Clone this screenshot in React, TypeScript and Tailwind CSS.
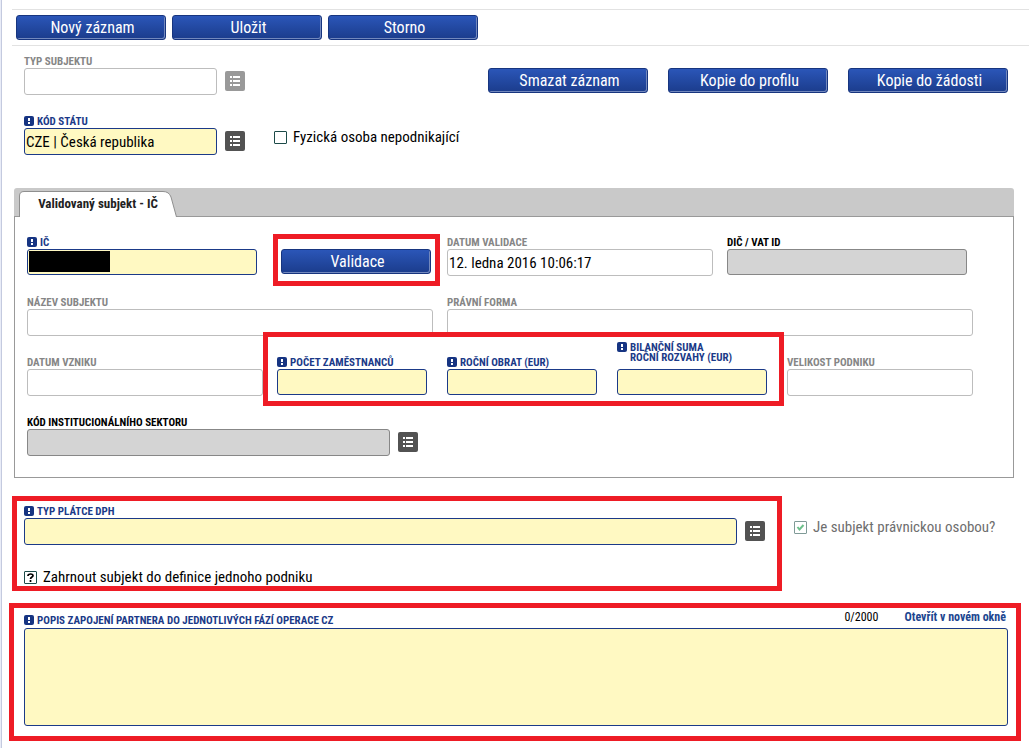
import { useId, type ReactNode } from "react";
import clsx from "clsx";

type Tone = "muted" | "plain" | "required";

const labelTone: Record<Tone, string> = {
  muted: "text-[#868686]",
  plain: "text-black",
  required: "text-[#1b3a88]",
};

const inputTone: Record<Tone, string> = {
  muted: "border-[#bdbdbd] bg-white",
  plain: "border-[#878787] bg-[#d4d4d4]",
  required: "border-[#1b3a88] bg-[#fff9c2]",
};

function RequiredMark() {
  return (
    <svg viewBox="0 0 10 10" className="h-[10px] w-[10px] shrink-0" aria-hidden="true">
      <rect width="10" height="10" rx="2" fill="#163482" />
      <path d="M4 2h2v3H4zM4 6h2v2H4z" fill="#fff" />
    </svg>
  );
}

function FieldLabel({ htmlFor, tone, children }: { htmlFor: string; tone: Tone; children: ReactNode }) {
  return (
    <label
      htmlFor={htmlFor}
      className={clsx(
        "flex h-[13px] items-start gap-[3px] whitespace-nowrap text-[11px] leading-[13px] font-bold",
        labelTone[tone],
      )}
    >
      {tone === "required" && (
        <span className="pt-px">
          <RequiredMark />
        </span>
      )}
      {children}
    </label>
  );
}

interface FieldProps {
  label: string;
  tone?: Tone;
  value?: string;
  className?: string;
  redacted?: boolean;
  compact?: boolean;
}

function Field({ label, tone = "muted", value = "", className, redacted, compact }: FieldProps) {
  const id = useId();
  return (
    <div className={clsx("min-w-0", className)}>
      <FieldLabel htmlFor={id} tone={tone}>
        {label}
      </FieldLabel>
      <div className="relative">
        <input
          id={id}
          type="text"
          defaultValue={value}
          className={clsx(
            "block w-full rounded-[3px] border px-px text-[15px] text-black outline-none",
            compact ? "h-[26px]" : "h-[27px]",
            inputTone[tone],
          )}
        />
        {redacted && <span className="absolute top-[2px] left-[2px] h-[21px] w-[81px] bg-black" />}
      </div>
    </div>
  );
}

function ListButton({ label, disabled }: { label: string; disabled?: boolean }) {
  return (
    <button
      type="button"
      aria-label={label}
      disabled={disabled}
      className={clsx("mb-1 ml-2 h-5 w-5 shrink-0 rounded-[2px]", disabled ? "bg-[#999]" : "bg-[#525252]")}
    >
      <svg viewBox="0 0 20 20" className="h-5 w-5" fill="#fff" aria-hidden="true">
        <path d="M5 5h2v2H5zM8 5h7v2H8zM5 9h2v2H5zM8 9h7v2H8zM5 13h2v2H5zM8 13h7v2H8z" />
      </svg>
    </button>
  );
}

function ActionButton({ children, className }: { children: ReactNode; className?: string }) {
  return (
    <button
      type="button"
      className={clsx(
        "h-[25px] rounded-[3px] border border-[#17357f] bg-linear-to-b from-[#2b56b8] to-[#1b3c8c] pl-[3px] text-[16px] leading-[23px] text-white shadow-[inset_-1px_-1px_0_#7288bd]",
        className,
      )}
    >
      {children}
    </button>
  );
}

interface CheckProps {
  label: string;
  state?: "off" | "on" | "unknown";
  disabled?: boolean;
}

function Check({ label, state = "off", disabled }: CheckProps) {
  return (
    <label
      className={clsx(
        "flex items-center gap-[6px] whitespace-nowrap text-[15px] leading-5",
        disabled ? "text-[#6e6e6e]" : "text-black",
      )}
    >
      <span className="relative block h-[13px] w-[13px] shrink-0">
        <input
          type="checkbox"
          defaultChecked={state === "on"}
          disabled={disabled}
          className={clsx(
            "block h-[13px] w-[13px] appearance-none rounded-[1px] border bg-white",
            disabled ? "border-[#7f9a97]" : "border-[#1c4a48]",
          )}
        />
        {state !== "off" && (
          <svg viewBox="0 0 13 13" className="pointer-events-none absolute inset-0 h-[13px] w-[13px]" fill="none">
            {state === "on" ? (
              <path d="M3.5 6l2 2.5 4-4.5" stroke="#6cc08b" strokeWidth="2" />
            ) : (
              <path d="M4 5V4.5C4 2.500 9 2.500 9 4.700C9 6 6.500 6 6.500 8M6.500 9v2" stroke="#000" strokeWidth="1.700" />
            )}
          </svg>
        )}
      </span>
      {label}
    </label>
  );
}

// Red frame drawn over a group of controls
function Highlight({ className }: { className: string }) {
  return <div className={clsx("pointer-events-none absolute z-10 border-5 border-[#ee1c25]", className)} />;
}

function SubjectTab() {
  return (
    <div role="tablist" className="flex h-7 items-end rounded-t-[3px] bg-[#c9c9c9] pl-[5px]">
      <button
        type="button"
        role="tab"
        aria-selected="true"
        className="relative -mb-px h-[26px] w-[158px] text-[13px] leading-[26px] font-bold text-[#222]"
      >
        <svg viewBox="0 0 158 26" className="absolute inset-0 h-[26px] w-[158px]" aria-hidden="true">
          <path d="M.5 26V5Q.5 .5 5 .5H144Q150 .5 152 6L157.500 26" fill="#fff" stroke="#8f8f8f" />
        </svg>
        <span className="relative">Validovaný subjekt - IČ</span>
      </button>
    </div>
  );
}

function SubjectPanel() {
  const balanceId = useId();
  return (
    <div className="mr-[15px] ml-3 mt-[33px]">
      <SubjectTab />
      <div role="tabpanel" className="flex flex-col gap-5 border border-[#999] pt-[19px] pr-10 pb-[21px] pl-3">
        <div className="flex items-start">
          <Field label="IČ" tone="required" redacted compact className="mr-6 flex-[230]" />
          <div className="relative mt-[13px] mr-4">
            <ActionButton className="block w-[150px]">Validace</ActionButton>
            <Highlight className="-top-[15px] -right-[9px] -bottom-3 -left-2" />
          </div>
          <Field label="DATUM VALIDACE" value="12. ledna 2016 10:06:17" className="mr-[14px] flex-[266]" />
          <Field label="DIČ / VAT ID" tone="plain" compact className="mr-[6px] flex-[240]" />
        </div>

        <div className="flex gap-[14px]">
          <Field label="NÁZEV SUBJEKTU" className="flex-[406]" />
          <Field label="PRÁVNÍ FORMA" className="flex-[526]" />
        </div>

        <div className="flex">
          <Field label="DATUM VZNIKU" className="mr-[14px] flex-[236]" />
          <div className="relative mr-5 flex gap-5">
            <Field label="POČET ZAMĚSTNANCŮ" tone="required" compact className="w-[150px]" />
            <Field label="ROČNÍ OBRAT (EUR)" tone="required" compact className="w-[150px]" />
            <div className="w-[150px]">
              {/* two-line caption grows upwards from the field */}
              <label
                htmlFor={balanceId}
                className="flex h-[13px] items-end gap-[3px] whitespace-nowrap pb-[6px] text-[11px] leading-[10px] font-bold text-[#1b3a88]"
              >
                <span className="flex h-[21px] items-start">
                  <RequiredMark />
                </span>
                <span>
                  BILANČNÍ SUMA
                  <br />
                  ROČNÍ ROZVAHY (EUR)
                </span>
              </label>
              <input
                id={balanceId}
                type="text"
                className="block h-[26px] w-full rounded-[3px] border border-[#1b3a88] bg-[#fff9c2] px-px text-[15px] outline-none"
              />
            </div>
            <Highlight className="-top-6 -right-[17px] -bottom-[10px] -left-[14px]" />
          </div>
          <Field label="VELIKOST PODNIKU" className="flex-[186]" />
        </div>

        <div className="flex items-end">
          <Field label="KÓD INSTITUCIONÁLNÍHO SEKTORU" tone="plain" className="w-[363px]" />
          <ListButton label="Vybrat sektor" />
        </div>
      </div>
    </div>
  );
}

export default function App() {
  const noteId = useId();
  return (
    <div className="min-h-screen bg-[#e9ecf7] pl-px font-['Roboto_Condensed','Roboto',sans-serif]">
      <main className="min-h-screen border-l border-[#c4cadf] bg-white pt-[9px]">
        <div className="ml-[10px] flex gap-[6px] border-y border-[#e2e2e2] py-[5px] pl-1">
          <ActionButton className="w-[150px]">Nový záznam</ActionButton>
          <ActionButton className="w-[150px]">Uložit</ActionButton>
          <ActionButton className="w-[150px]">Storno</ActionButton>
        </div>

        <div className="mt-[9px] mr-[21px] ml-[22px] flex items-end">
          <Field label="TYP SUBJEKTU" className="w-[193px]" />
          <ListButton label="Vybrat typ subjektu" disabled />
          <div className="mb-[2px] ml-auto flex gap-5">
            <ActionButton className="w-[160px]">Smazat záznam</ActionButton>
            <ActionButton className="w-[160px]">Kopie do profilu</ActionButton>
            <ActionButton className="w-[160px]">Kopie do žádosti</ActionButton>
          </div>
        </div>

        <div className="mt-5 ml-[22px] flex items-end">
          <Field label="KÓD STÁTU" tone="required" value="CZE | Česká republika" className="w-[193px]" />
          <ListButton label="Vybrat stát" />
          <div className="mb-[8px] ml-[29px]">
            <Check label="Fyzická osoba nepodnikající" />
          </div>
        </div>

        <SubjectPanel />

        <div className="mt-[18px] mr-[21px] ml-[10px] flex">
          <section className="flex-1 border-5 border-[#ee1c25] pt-1 pr-3 pl-[7px]">
            <div className="flex items-end">
              <Field label="TYP PLÁTCE DPH" tone="required" className="flex-1" />
              <ListButton label="Vybrat typ plátce" />
            </div>
            <div className="mt-[22px] h-[19px]">
              <Check label="Zahrnout subjekt do definice jednoho podniku" state="unknown" />
            </div>
          </section>
          <div className="w-[226px] pt-[21px] pl-3">
            <Check label="Je subjekt právnickou osobou?" state="on" disabled />
          </div>
        </div>

        <section className="mt-3 mr-2 ml-[7px] border-5 border-[#ee1c25] pt-[2px] pr-2 pb-[10px] pl-[10px]">
          <div className="flex h-[18px] items-start">
            <div className="pt-1">
              <FieldLabel htmlFor={noteId} tone="required">
                POPIS ZAPOJENÍ PARTNERA DO JEDNOTLIVÝCH FÁZÍ OPERACE CZ
              </FieldLabel>
            </div>
            <span className="mr-[26px] ml-auto text-[12px] leading-[15px] text-black">0/2000</span>
            <a href="#okno" className="mr-[2px] text-[12px] leading-[15px] font-bold text-[#1c4690]">
              Otevřít v novém okně
            </a>
          </div>
          <textarea
            id={noteId}
            className="block h-[98px] w-full resize-none rounded-[3px] border border-[#1b3a88] bg-[#fff9c2] p-1 text-[15px] outline-none"
          />
        </section>
      </main>
    </div>
  );
}
